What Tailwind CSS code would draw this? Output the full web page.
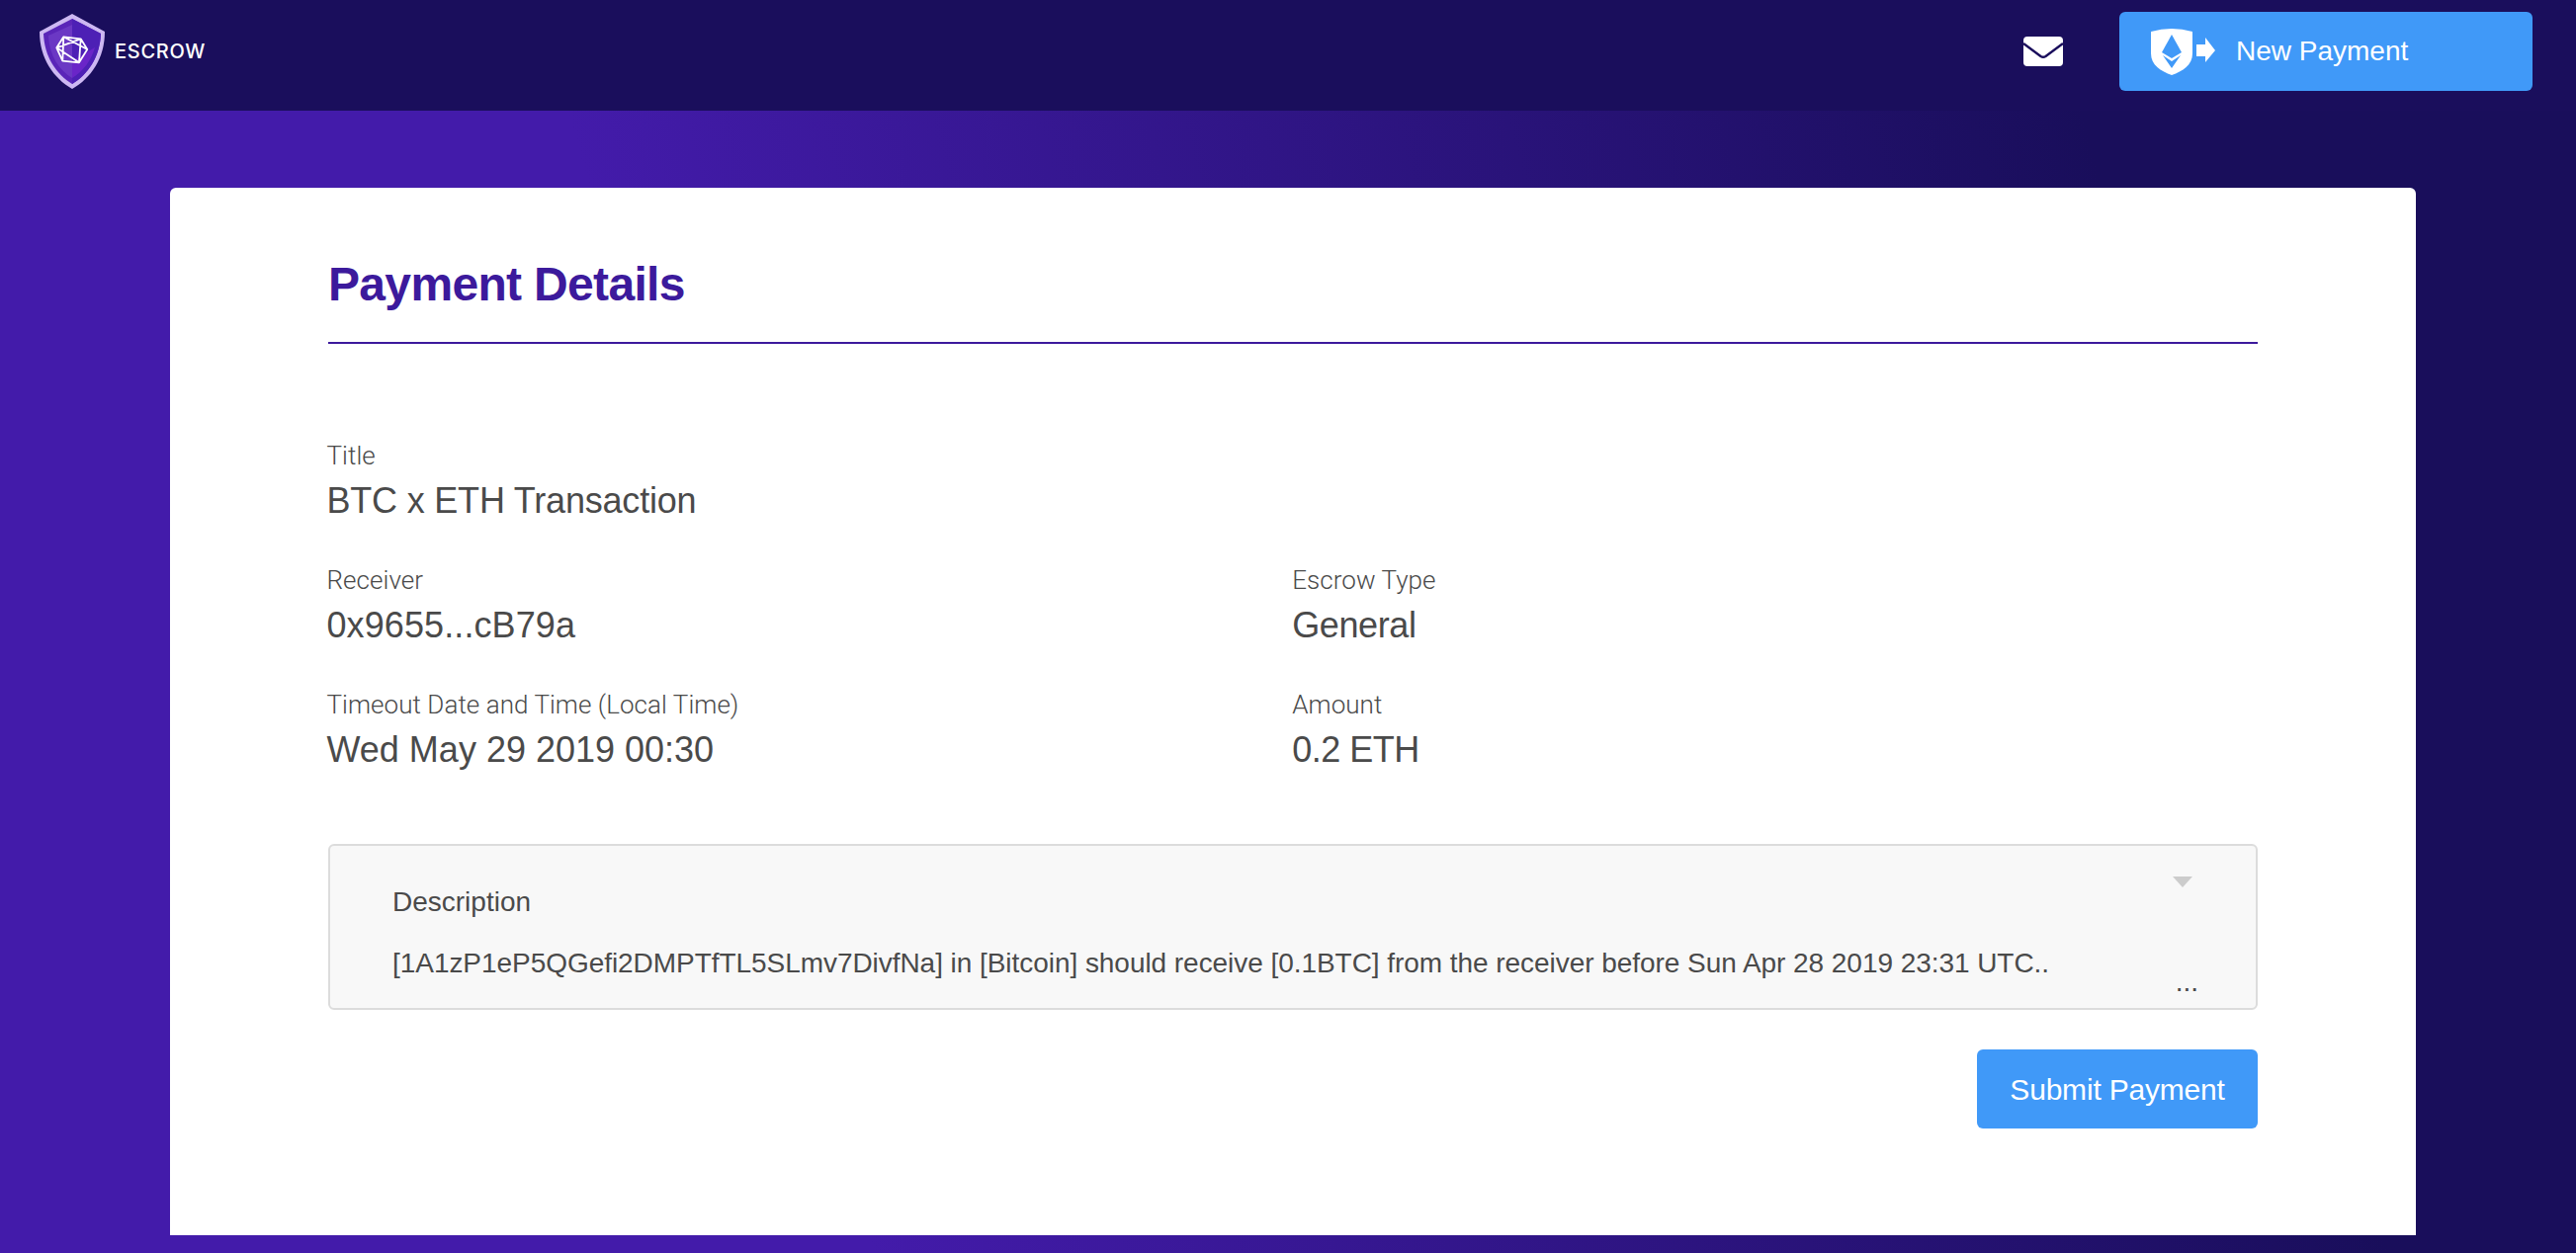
<!doctype html>
<html>
<head>
<meta charset="utf-8">
<script src="https://cdn.jsdelivr.net/npm/@tailwindcss/browser@4"></script>
</head>
<body class="h-[1268px] overflow-hidden bg-[linear-gradient(75deg,#431baa_30%,#190e5b_82%)] font-['Liberation_Sans',sans-serif] text-[#4a4a4a]">
<header class="flex h-[112px] items-center justify-between bg-[#1a0e5c] pb-[8px] pl-[40px] pr-[44px]">
  <div class="flex items-center gap-[10px]">
    <svg class="h-[76px] w-[66px]" viewBox="0 0 66 76">
      <path d="M33 0 L66 18 C66 45 52 65 33 76 C14 65 0 45 0 18 Z" fill="#cdb8f2"/>
      <path d="M33 5 L62 20 C61 44 49 61 33 71 C17 61 5 44 4 20 Z" fill="#5a25b8"/>
      <path d="M33 5 L62 20 C61 44 49 61 33 71 Z" fill="#4d20b5"/>
      <path d="M33 11 V65 C20 57 10 43 9 22 Z" fill="#6b38c4"/>
      <path d="M33 48 V65 C44 58 52 48 56 34 Z" fill="#6a25c8"/>
      <path d="M24.3 23.3 L41.7 25.3 L48.3 36 L40 49.3 L23.3 47.7 L17.3 34.3 Z M24.3 23.3 L23.3 47.7 M17.3 34.3 L41.7 25.3 M17.3 34.3 L40 49.3 M41.7 25.3 L40 49.3 M24.3 23.3 L48.3 36" fill="none" stroke="#fff" stroke-width="1.8" stroke-linejoin="round"/>
    </svg>
    <span class="font-['Inter',sans-serif] text-[20px] font-medium tracking-[0.7px] text-white">ESCROW</span>
  </div>
  <div class="flex items-center gap-[57px]">
    <svg class="h-[30px] w-[40px]" viewBox="0 0 40 30">
      <rect width="40" height="30" rx="4" fill="#fff"/>
      <path d="M0 7 L17.5 20 Q20 21.5 22.5 20 L40 7" fill="none" stroke="#1a0e5c" stroke-width="2.4"/>
    </svg>
    <button class="flex h-[80px] w-[418px] items-center gap-[20px] rounded-[6px] bg-[#4099f8] pl-[32px] text-[28px] text-white">
      <svg class="h-[48px] w-[66px]" viewBox="0 0 66 48">
        <path d="M0 4 Q21 -2 42 4 L42 26 C42 38 32 44 21 48 C10 44 0 38 0 26 Z" fill="#fff"/>
        <path d="M21 7 L31 25 L21 31 L11 25 Z" fill="#4099f8"/>
        <path d="M12 28 L21 34 L30 28 L21 41 Z" fill="#4099f8"/>
        <path d="M46 17 H55 V10 L65 23 L55 35 V29 H46 Z" fill="#fff"/>
      </svg>
      <span>New Payment</span>
    </button>
  </div>
</header>
<main class="mt-[78px] mr-[162px] ml-[172px] h-[1060px] rounded-t-[6px] bg-white px-[160px] pt-[70px]">
  <h1 class="border-b-2 border-[#3c1a9c] pb-[30px] text-[48px] leading-[56px] font-bold tracking-[-0.67px] text-[#3c1a9c]">Payment Details</h1>
  <div class="mt-[97px] -ml-[1.5px] grid grid-cols-2 gap-y-[42px]">
    <div class="col-span-2">
      <div class="font-['Roboto',sans-serif] text-[26px] leading-[32px] font-light tracking-[0.05px]">Title</div>
      <div class="mt-[8px] text-[36px] leading-[44px] tracking-[-0.2px]">BTC x ETH Transaction</div>
    </div>
    <div>
      <div class="font-['Roboto',sans-serif] text-[26px] leading-[32px] font-light tracking-[0.05px]">Receiver</div>
      <div class="mt-[8px] text-[36px] leading-[44px] tracking-[0.1px]">0x9655...cB79a</div>
    </div>
    <div>
      <div class="font-['Roboto',sans-serif] text-[26px] leading-[32px] font-light tracking-[0.05px]">Escrow Type</div>
      <div class="mt-[8px] text-[36px] leading-[44px] tracking-[-0.4px]">General</div>
    </div>
    <div>
      <div class="font-['Roboto',sans-serif] text-[26px] leading-[32px] font-light tracking-[0.05px]">Timeout Date and Time (Local Time)</div>
      <div class="mt-[8px] text-[36px] leading-[44px]">Wed May 29 2019 00:30</div>
    </div>
    <div>
      <div class="font-['Roboto',sans-serif] text-[26px] leading-[32px] font-light tracking-[0.05px]">Amount</div>
      <div class="mt-[8px] text-[36px] leading-[44px] tracking-[-0.5px]">0.2 ETH</div>
    </div>
  </div>
  <section class="relative mt-[73px] h-[168px] rounded-[6px] border-2 border-[#dcdcdc] bg-[#f8f8f8] pt-[40px] pl-[63px] text-[28px] leading-[34px]">
    <div>Description</div>
    <div class="mt-[28px] whitespace-nowrap tracking-[-0.05px]">[1A1zP1eP5QGefi2DMPTfTL5SLmv7DivfNa] in [Bitcoin] should receive [0.1BTC] from the receiver before Sun Apr 28 2019 23:31 UTC..</div>
    <span class="absolute top-[31px] right-[64px] h-0 w-0 border-x-[10px] border-t-[11px] border-x-transparent border-t-[#cccccc]"></span>
    <span class="absolute right-[58px] bottom-[12px] text-[28px] leading-[28px]">...</span>
  </section>
  <div class="mt-[40px] flex justify-end">
    <button class="h-[80px] w-[284px] rounded-[6px] bg-[#4099f8] text-[30px] tracking-[-0.2px] text-white">Submit Payment</button>
  </div>
</main>
</body>
</html>
